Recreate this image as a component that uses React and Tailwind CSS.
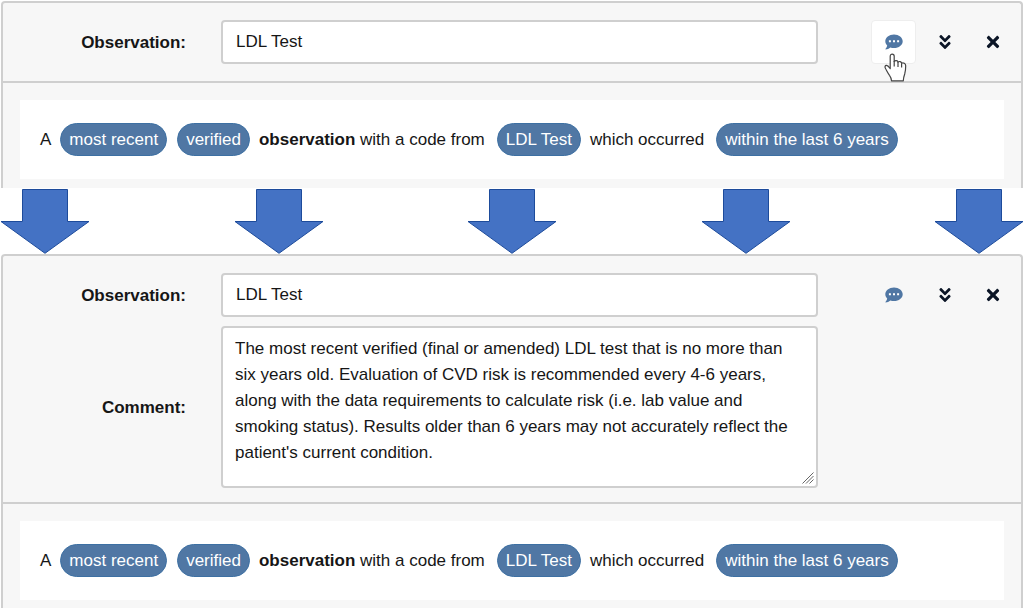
import React from "react";
import { FaAngleDoubleDown, FaTimes } from "react-icons/fa";

const COMMENT =
  "The most recent verified (final or amended) LDL test that is no more than six years old. Evaluation of CVD risk is recommended every 4-6 years, along with the data requirements to calculate risk (i.e. lab value and smoking status). Results older than 6 years may not accurately reflect the patient's current condition.";

function CommentIcon() {
  return (
    <svg className="h-[18px] w-[18px]" viewBox="0 0 18 18" aria-hidden="true">
      <path
        d="M9 1.500C13.900 1.500 17.700 4.500 17.700 8.300S13.900 15.100 9 15.100C7.700 15.100 6.500 14.900 5.400 14.500C4 15.700 2.200 16.500 .6 16.500C.3 16.400 .4 16 .6 15.800C1.400 14.900 2 13.800 2.200 12.600C1 11.400 .3 9.900 .3 8.300C.3 4.500 4.100 1.500 9 1.500Z"
        fill="currentColor"
      />
      <path d="M3.900 7.300h2v2h-2zM8 7.300h2v2H8zM12.100 7.300h2v2h-2z" fill="#fff" />
    </svg>
  );
}

function HandPointer() {
  return (
    <svg
      className="pointer-events-none absolute left-[13px] top-[33px] h-[29px] w-[23px]"
      viewBox="0 0 23 29"
      aria-hidden="true"
    >
      <path
        d="M7.500 27.800C7.300 25.500 6.800 24 5.500 22.300C3.700 19.800 2.700 17.500 1.500 15.500C.4 13.600 1.200 12.300 2.500 12.400C4.100 12.500 5 14 6.200 15.700V3.300C6.200 .3 10.200 .3 10.200 3.300V8.500C11.300 7.100 13.700 7.500 14 9.100C15.200 8 17.400 8.500 17.600 10.200C19.300 9.300 21.700 10.500 21.700 12.800C21.700 16 21.500 18.500 20.700 21C19.800 23.500 19.400 25.500 19.300 27.800Z"
        fill="#fff"
        stroke="#444"
        strokeWidth="1.200"
        strokeLinejoin="round"
      />
      <path d="M10.200 8v5.500M14 9.100v4.900M17.600 10.200v4.300" fill="none" stroke="#444" strokeWidth="1.200" />
    </svg>
  );
}

function ResizeGrip() {
  return (
    <svg className="pointer-events-none absolute bottom-1 right-1 h-3 w-3" viewBox="0 0 12 12" aria-hidden="true">
      <path d="M.5 11.500L11.500 .5M4 11.500L11.500 4M7.500 11.500L11.500 7.500" fill="none" stroke="#666" />
    </svg>
  );
}

function Actions({ hovered }) {
  return (
    <div className="ml-[53px] flex shrink-0 gap-[9px] text-[#0b1526]">
      <div className="relative">
        <button
          type="button"
          aria-label="Toggle comment"
          className={
            hovered
              ? "flex h-11 w-[45px] items-center justify-center rounded-sm border border-[#eeeeee] bg-white text-[#5077a4]"
              : "flex h-11 w-[45px] items-center justify-center text-[#5077a4]"
          }
        >
          <CommentIcon />
        </button>
        {hovered && <HandPointer />}
      </div>
      <button type="button" aria-label="Collapse" className="flex h-11 w-[39px] items-center justify-center text-lg">
        <FaAngleDoubleDown />
      </button>
      <button type="button" aria-label="Delete" className="flex h-11 w-10 items-center justify-center text-lg">
        <FaTimes />
      </button>
    </div>
  );
}

function Pill({ children }) {
  return (
    <span className="mx-px flex h-[33px] items-center rounded-full border border-[#3d70a3] bg-[#5077a4] px-2 text-white">
      {children}
    </span>
  );
}

function Phrase() {
  return (
    <div className="flex flex-wrap items-center gap-2 bg-white px-5 py-[23px]">
      <span>A</span>
      <Pill>most recent</Pill>
      <Pill>verified</Pill>
      <span className="mr-[3px]">
        <strong>observation</strong> with a code from
      </span>
      <Pill>LDL Test</Pill>
      <span className="mr-[3px]">which occurred</span>
      <Pill>within the last 6 years</Pill>
    </div>
  );
}

function ElementCard({ id, hovered, comment }) {
  const label = "w-[183px] shrink-0 text-right font-bold text-[#161616]";
  return (
    <section className="mx-px rounded-t border-2 border-b-0 border-[#cfcfcf] bg-[#f7f7f7]">
      <div
        className={
          comment
            ? "flex flex-col gap-[9px] border-b-2 border-[#cfcfcf] pb-[14px] pr-2 pt-[17px]"
            : "flex flex-col border-b-2 border-[#cfcfcf] pb-[17px] pr-2 pt-[17px]"
        }
      >
        <div className="flex items-center">
          <label htmlFor={id + "-name"} className={label}>
            Observation:
          </label>
          <input
            id={id + "-name"}
            type="text"
            defaultValue="LDL Test"
            className="ml-[35px] h-11 min-w-0 flex-1 rounded-sm border-2 border-[#cfcfcf] bg-white px-[13px] outline-none"
          />
          <Actions hovered={hovered} />
        </div>
        {comment && (
          <div className="flex items-center">
            <label htmlFor={id + "-comment"} className={label}>
              Comment:
            </label>
            <div className="relative ml-[35px] mr-[195px] min-w-0 flex-1">
              <textarea
                id={id + "-comment"}
                defaultValue={comment}
                className="block h-[162px] w-full resize-none rounded-sm border-2 border-[#cfcfcf] bg-white px-3 py-2 leading-[26px] outline-none"
              />
              <ResizeGrip />
            </div>
          </div>
        )}
      </div>
      <div className="px-[17px] pb-[9px] pt-[17px]">
        <Phrase />
      </div>
    </section>
  );
}

function DownArrow() {
  return (
    <svg className="h-[66px] w-[90px]" viewBox="0 0 90 66" aria-hidden="true">
      <path d="M22.500 1.500H67.500V33.500H89L45 65.300L1 33.500H22.500Z" fill="#4472c4" stroke="#1d4b9b" />
    </svg>
  );
}

export default function App() {
  return (
    <main className="bg-white pt-px font-['Liberation_Sans',Arial,sans-serif] text-[17px] leading-[25px] text-[#161616]">
      <ElementCard id="before" hovered />
      <div className="flex justify-between" aria-hidden="true">
        <DownArrow />
        <DownArrow />
        <DownArrow />
        <DownArrow />
        <DownArrow />
      </div>
      <ElementCard id="after" comment={COMMENT} />
    </main>
  );
}
